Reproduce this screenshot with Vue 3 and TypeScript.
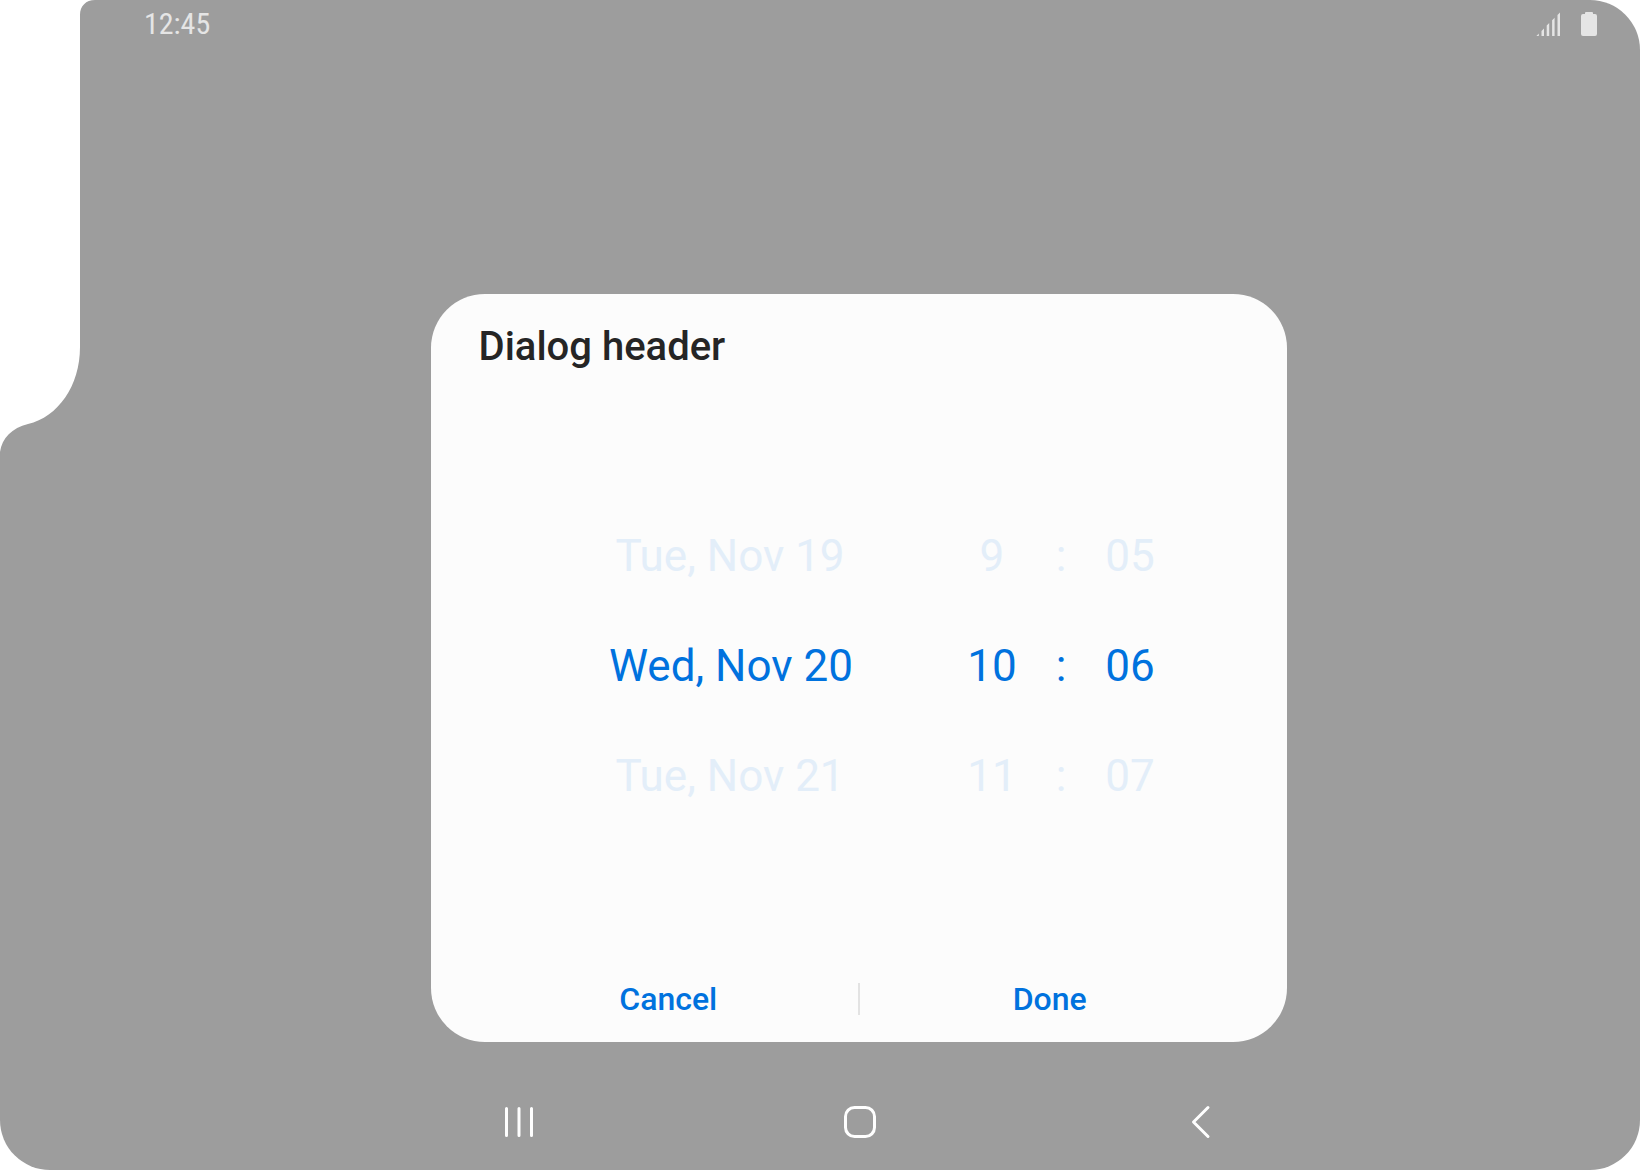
<script setup lang="ts">
import { reactive } from 'vue'

interface Wheel {
  id: string
  label: string
  items: string[]
  selected: number
}

const date = reactive<Wheel>({
  id: 'date',
  label: 'Date',
  items: ['Tue, Nov 19', 'Wed, Nov 20', 'Tue, Nov 21'],
  selected: 1,
})
const hour = reactive<Wheel>({ id: 'hour', label: 'Hour', items: ['9', '10', '11'], selected: 1 })
const minute = reactive<Wheel>({ id: 'minute', label: 'Minute', items: ['05', '06', '07'], selected: 1 })

const wheels: Wheel[] = [date, hour, minute]
</script>

<template>
  <div class="screen">
    <svg class="cutout" width="96" height="456" viewBox="0 0 96 456" aria-hidden="true">
      <path d="M0 0H95C86 0 80 6 80 15V347C80 386 58 417 28 424C12 428 2 438 0 452Z" fill="#fff" />
    </svg>

    <header class="status">
      <time class="clock">12:45</time>
      <div class="indicators">
        <svg width="24" height="24" viewBox="0 0 24 24" fill="#e5e5e5" aria-hidden="true">
          <path d="M.4 24L2.8 21.5V24ZM5.5 19L8 16.5V24H5.5ZM10.7 13.6L13.2 11V24H10.7ZM16.1 8.3L18.6 5.7V24H16.1ZM21.5 3L24 .5V24H21.5Z" />
        </svg>
        <svg width="16" height="24" viewBox="0 0 16 24" fill="#e5e5e5" aria-hidden="true">
          <path d="M5 0H11Q12 0 12 1V2H14Q16 2 16 4V22Q16 24 14 24H2Q0 24 0 22V4Q0 2 2 2H4V1Q4 0 5 0Z" />
        </svg>
      </div>
    </header>

    <main class="stage">
      <section class="dialog" role="dialog" aria-labelledby="dialog-title">
        <h1 id="dialog-title" class="title">Dialog header</h1>

        <div class="picker">
          <template v-for="wheel in wheels" :key="wheel.id">
            <div v-if="wheel.id === 'minute'" class="wheel colons" aria-hidden="true">
              <span class="cell faded">:</span>
              <span class="cell">:</span>
              <span class="cell faded">:</span>
            </div>
            <div class="wheel" :class="wheel.id" role="group" :aria-label="wheel.label">
              <button
                v-for="(item, index) in wheel.items"
                :key="item"
                type="button"
                class="cell"
                :class="{ faded: index !== wheel.selected }"
                :aria-pressed="index === wheel.selected"
                @click="wheel.selected = index"
              >{{ item }}</button>
            </div>
          </template>
        </div>

        <footer class="actions">
          <button type="button" class="action">Cancel</button>
          <span class="divider"></span>
          <button type="button" class="action">Done</button>
        </footer>
      </section>
    </main>

    <nav class="nav" aria-label="System navigation">
      <button type="button" class="nav-button" aria-label="Recents">
        <svg width="32" height="34" viewBox="0 0 32 34" fill="none" stroke="#fff" stroke-width="3" stroke-linecap="round">
          <path d="M3.5 3.5V30.5M16 3.5V30.5M28.5 3.5V30.5" />
        </svg>
      </button>
      <button type="button" class="nav-button" aria-label="Home">
        <svg width="34" height="34" viewBox="0 0 34 34" fill="none" stroke="#fff" stroke-width="3">
          <rect x="2.5" y="2.5" width="29" height="29" rx="9" />
        </svg>
      </button>
      <button type="button" class="nav-button" aria-label="Back">
        <svg width="34" height="34" viewBox="0 0 34 34" fill="none" stroke="#fff" stroke-width="3" stroke-linecap="round" stroke-linejoin="round">
          <path d="M24 2.5L9.5 17L24 31.5" />
        </svg>
      </button>
    </nav>
  </div>
</template>

<style>
body {
  margin: 0;
  background: #fff;
}
</style>

<style scoped>
.screen {
  position: relative;
  display: flex;
  flex-direction: column;
  box-sizing: border-box;
  min-height: 100vh;
  padding-left: 80px;
  overflow: hidden;
  border-radius: 0 50px 50px 50px;
  background: #9d9d9d;
  font-family: Roboto, 'Liberation Sans', sans-serif;
}

.cutout {
  position: absolute;
  top: 0;
  left: 0;
}

button {
  padding: 0;
  border: 0;
  background: none;
  color: inherit;
  font: inherit;
  cursor: pointer;
}

svg {
  display: block;
}

.status {
  display: flex;
  align-items: center;
  justify-content: space-between;
  height: 48px;
  padding: 0 43px 0 64px;
}

.clock {
  color: #e5e5e5;
  font-family: 'Roboto Condensed', Roboto, sans-serif;
  font-size: 30px;
  line-height: 48px;
}

.indicators {
  display: flex;
  gap: 21px;
}

.stage {
  display: flex;
  flex: 1;
  align-items: flex-end;
  justify-content: center;
  padding: 0 2px 32px 0;
}

.dialog {
  display: flex;
  flex-direction: column;
  box-sizing: border-box;
  width: 55%;
  min-width: 720px;
  padding: 29px 48px 11px;
  border-radius: 54px;
  background: #fcfcfc;
}

.title {
  margin: 0;
  color: #252525;
  font-size: 40px;
  font-weight: 500;
  line-height: 48px;
}

.picker {
  display: flex;
  justify-content: center;
  padding: 130px 0 136px 46px;
  color: #0072de;
  font-size: 44px;
  line-height: 110px;
}

.wheel {
  display: flex;
  flex-direction: column;
  width: 50px;
  text-align: center;
}

.wheel.date {
  width: 242px;
  margin-right: 116px;
}

.wheel.colons {
  width: 88px;
}

.cell {
  height: 110px;
  white-space: nowrap;
}

.faded {
  color: #e3eef9;
}

.actions {
  display: flex;
  align-items: center;
  color: #0072de;
  font-size: 32px;
  font-weight: 500;
  line-height: 64px;
}

.action {
  flex: 1;
}

.divider {
  width: 2px;
  height: 32px;
  background: #e3e3e3;
}

.nav {
  display: grid;
  grid-template-columns: repeat(3, 1fr);
  align-self: center;
  width: 66%;
  max-width: 1024px;
  height: 96px;
}

.nav-button {
  display: flex;
  align-items: center;
  justify-content: center;
}
</style>
